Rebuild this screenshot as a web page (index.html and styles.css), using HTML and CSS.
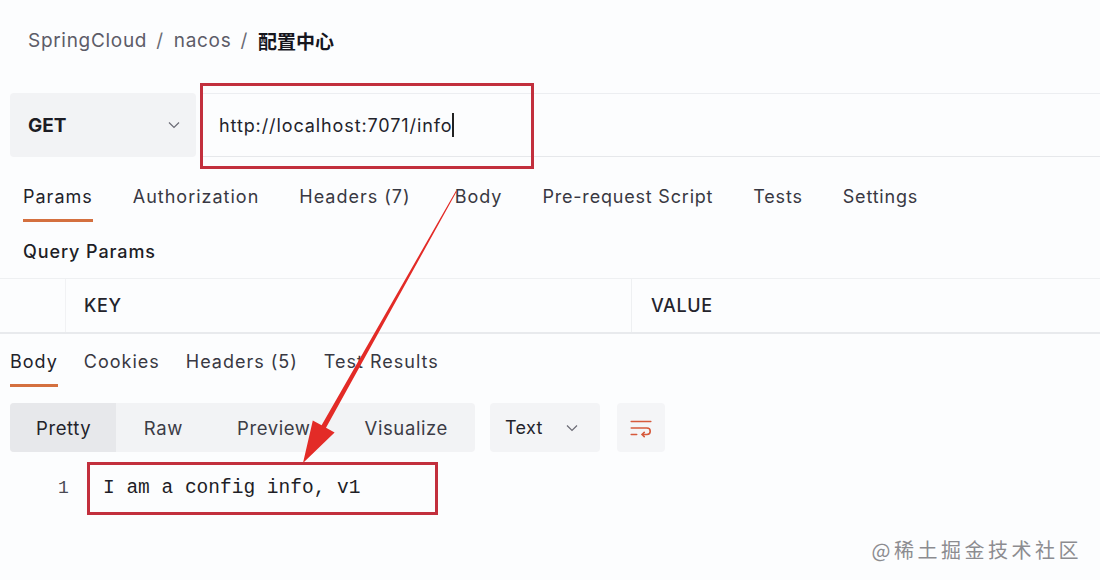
FILE: index.html
```html
<!DOCTYPE html>
<html>
<head>
<meta charset="utf-8">
<link rel="stylesheet" href="styles.css">
</head>
<body>
<div class="page">
  <div class="crumbs">
    <span>SpringCloud</span><span class="sep">/</span><span>nacos</span><span class="sep">/</span><span class="cur">配置中心</span>
  </div>

  <div class="req">
    <div class="method">
      <span>GET</span>
      <svg class="chev" viewBox="0 0 12 8" width="12" height="8"><path d="M1 1.5l5 5 5-5" fill="none" stroke="#6b6b75" stroke-width="1.2"/></svg>
    </div>
    <div class="url">
      <span class="url-text">http://localhost:7071/info</span><span class="caret"></span>
      <div class="mark mark-url"></div>
    </div>
  </div>

  <div class="tabs req-tabs">
    <span class="tab on">Params</span>
    <span class="tab">Authorization</span>
    <span class="tab">Headers (7)</span>
    <span class="tab tab-body">Body</span>
    <span class="tab tab-narrow">Pre-request Script</span>
    <span class="tab tab-narrow">Tests</span>
    <span class="tab tab-narrow">Settings</span>
  </div>

  <div class="qp">Query Params</div>

  <div class="kv">
    <div class="kv-c0"></div>
    <div class="kv-key">KEY</div>
    <div class="kv-val">VALUE</div>
  </div>

  <div class="tabs res-tabs">
    <span class="tab on">Body</span>
    <span class="tab">Cookies</span>
    <span class="tab">Headers (5)</span>
    <span class="tab">Test Results</span>
  </div>

  <div class="toolbar">
    <div class="seg">
      <span class="seg-item on">Pretty</span>
      <span class="seg-item">Raw</span>
      <span class="seg-item">Preview</span>
      <span class="seg-item">Visualize</span>
    </div>
    <div class="select">
      <span>Text</span>
      <svg viewBox="0 0 12 8" width="12" height="8"><path d="M1 1.5l5 5 5-5" fill="none" stroke="#6b6b75" stroke-width="1.2"/></svg>
    </div>
    <div class="wrap-btn">
      <svg viewBox="0 0 24 24" width="26" height="26" fill="none" stroke="#d65a3c" stroke-width="1.5" stroke-linecap="round" stroke-linejoin="round">
        <path d="M3 6h18"/>
        <path d="M3 12h14.5a3 3 0 0 1 0 6H13"/>
        <path d="M15 16l-2 2 2 2"/>
        <path d="M3 18h5"/>
      </svg>
    </div>
  </div>

  <div class="code">
    <span class="ln">1</span>
    <span class="line">I am a config info, v1<span class="mark mark-code"></span></span>
  </div>

  <div class="watermark">@稀土掘金技术社区</div>

  <svg class="arrow" viewBox="0 0 1100 580" width="1100" height="580">
    <polygon fill="#e32b27" points="456.8,191.3 326,427.7 334.6,432.6 303,463 312.8,420.6 321.6,425.3 456,190.8"/>
  </svg>
</div>
</body>
</html>
```

FILE: styles.css
```css
* { box-sizing: border-box; }
html, body { margin: 0; padding: 0; }
body {
  background: #fcfdfe;
  font-family: Inter, "Noto Sans", "Noto Sans CJK SC", sans-serif;
  color: #2b2b33;
  width: 1100px;
  height: 580px;
  overflow: hidden;
}
.page { position: relative; width: 1100px; height: 580px; }

.crumbs {
  height: 80px;
  display: flex;
  align-items: center;
  padding-left: 28px;
  font-size: 19px;
  color: #5c5c68;
  letter-spacing: 0.7px;
}
.crumbs .sep { margin: 0 10px 0 9px; color: #6a6a74; }
.crumbs .cur { color: #16161e; font-weight: 700; font-family: "Noto Sans CJK SC", sans-serif; font-size: 19px; letter-spacing: 0; }

.req {
  margin-top: 13px;
  height: 64px;
  display: flex;
}
.method {
  margin-left: 10px;
  width: 186px;
  height: 64px;
  background: #f2f3f5;
  border-radius: 4px;
  display: flex;
  align-items: center;
  justify-content: space-between;
  padding: 0 16px 0 18px;
  font-size: 19px;
  font-weight: 700;
  color: #1c1c24;
}
.url {
  position: relative;
  margin-left: 4px;
  flex: 1;
  height: 64px;
  border-top: 1px solid #eceef1;
  border-bottom: 1px solid #e6e8eb;
  display: flex;
  align-items: center;
  padding-left: 19px;
  font-size: 18px;
  color: #23232b;
  letter-spacing: 0.9px;
}
.caret { display: inline-block; width: 1.5px; height: 24px; background: #222; margin-left: 0; }

.mark { position: absolute; border: 3px solid #c22f3d; pointer-events: none; }
.mark-url { left: 0; top: -11px; width: 334px; height: 86px; }

.tabs { display: flex; font-size: 18px; color: #383842; letter-spacing: 1px; }
.tab { line-height: 24px; padding-bottom: 10px; border-bottom: 3px solid transparent; }
.tab.on { border-bottom-color: #d4703f; color: #22222a; }

.req-tabs { padding-top: 28px; padding-left: 23px; gap: 40px; }
.req-tabs .tab-body { margin-left: 4px; }
.req-tabs .tab-narrow { letter-spacing: 0.8px; }

.qp {
  padding-top: 18px;
  padding-left: 23px;
  line-height: 24px;
  font-size: 18px;
  font-weight: 500;
  color: #1e1e26;
  letter-spacing: 0.9px;
}

.kv {
  margin-top: 14px;
  height: 56px;
  display: flex;
  border-top: 1px solid #eef0f2;
  border-bottom: 2px solid #e8eaed;
  font-size: 18px;
  font-weight: 500;
  color: #24242c;
  letter-spacing: 0.6px;
}
.kv-c0 { width: 66px; border-right: 1px solid #f1f2f4; }
.kv-key { width: 566px; padding-left: 18px; display: flex; align-items: center; border-right: 1px solid #eef0f2; }
.kv-val { flex: 1; padding-left: 19px; display: flex; align-items: center; }

.res-tabs { padding-top: 16px; padding-left: 10px; gap: 26px; }

.toolbar {
  margin-top: 16px;
  display: flex;
  align-items: stretch;
  padding-left: 10px;
  height: 49px;
}
.seg {
  display: flex;
  background: #f2f3f5;
  border-radius: 4px;
  width: 465px;
  font-size: 18.5px;
  color: #3c3c46;
  letter-spacing: 0.6px;
}
.seg-item { display: flex; align-items: center; padding: 0 27px; }
.seg-item.on { background: #e7e8eb; border-radius: 4px 0 0 4px; color: #22222a; width: 108px; padding: 0 0 0 26px; }
.seg-item.on + .seg-item { padding-left: 28px; }
.select {
  margin-left: 15px;
  width: 110px;
  background: #f3f4f6;
  border-radius: 4px;
  display: flex;
  align-items: center;
  justify-content: space-between;
  padding: 0 22px 0 15px;
  font-size: 18px;
  color: #24242c;
  letter-spacing: 0.3px;
}
.wrap-btn {
  margin-left: 17px;
  width: 48px;
  background: #f4f5f7;
  border-radius: 4px;
  display: flex;
  align-items: center;
  justify-content: center;
}

.code {
  margin-top: 23px;
  display: flex;
  line-height: 26px;
  font-family: "Liberation Mono", "DejaVu Sans Mono", monospace;
  font-size: 19.5px;
  color: #1e1e26;
}
.ln { width: 103px; padding-left: 58px; color: #4a4a54; font-size: 18px; }
.line { position: relative; }
.mark-code { left: -16px; top: -13px; width: 351px; height: 53px; }

.watermark {
  margin-top: 35px;
  text-align: right;
  padding-right: 18px;
  font-size: 20px;
  letter-spacing: 3.5px;
  color: #8c8c90;
  font-family: "Noto Sans CJK SC", sans-serif;
  line-height: 28px;
}

.arrow { position: absolute; left: 0; top: 0; pointer-events: none; }
```
